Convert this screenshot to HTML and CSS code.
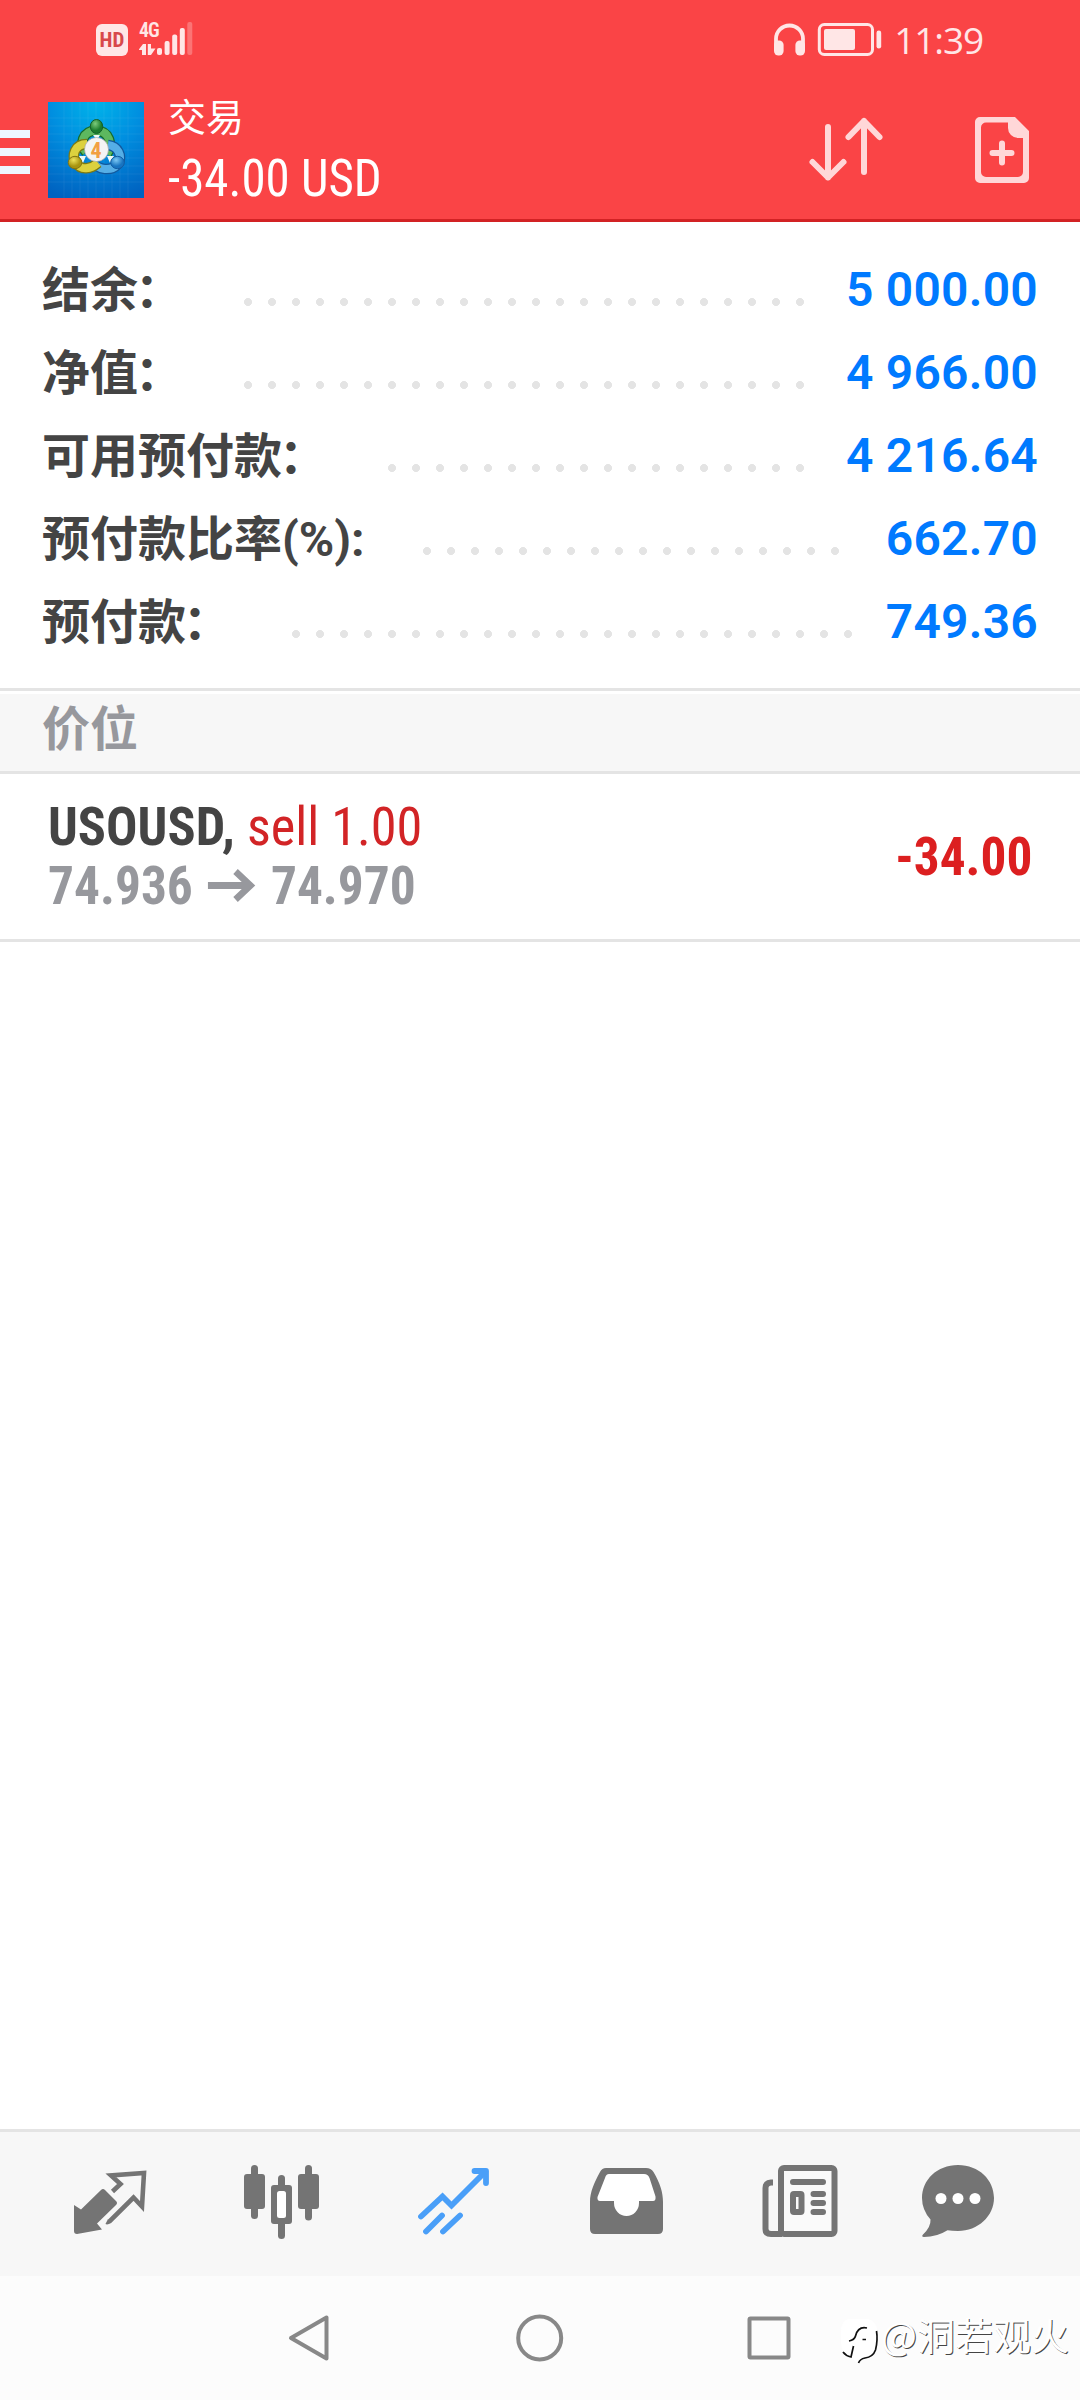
FILE: index.html
```html
<!DOCTYPE html>
<html lang="zh-CN">
<head>
<meta charset="utf-8">
<title>交易</title>
<link rel="stylesheet" href="styles.css">
</head>
<body>
<div class="screen">
  <header class="top">
    <div class="status">
      <div class="status-left">
        <span class="hd">HD</span>
        <div class="network">
          <span class="net-type">4G</span>
          <svg class="signal" viewBox="139 20 54 36" width="54" height="36">
            <g fill="#ffe6e6">
              <path d="M138.500 50L143 44H146V55H142V50Z"/>
              <path d="M147.800 44H151V48.500H155.500L151 55H147.800Z"/>
              <rect x="157" y="48" width="5" height="7" rx="2"/>
              <rect x="164.600" y="41" width="5" height="14" rx="2"/>
              <rect x="172.200" y="34.500" width="5" height="20.500" rx="2"/>
              <rect x="179.800" y="28" width="5" height="27" rx="2"/>
              <rect x="187.300" y="22" width="5" height="33" rx="2" opacity=".3"/>
            </g>
          </svg>
        </div>
      </div>
      <div class="status-right">
        <svg viewBox="772 20 112 38" width="112" height="38">
          <path d="M776 46V39a13.500 13.500 0 0 1 27 0v7" fill="none" stroke="#ffe6e6" stroke-width="3.800"/>
          <rect x="774" y="40.500" width="9.600" height="15" rx="4.500" fill="#ffe6e6"/>
          <rect x="795.400" y="40.500" width="9.600" height="15" rx="4.500" fill="#ffe6e6"/>
          <rect x="819.300" y="24.500" width="53.200" height="30" rx="5" fill="none" stroke="#ffe6e6" stroke-width="3"/>
          <rect x="824" y="29" width="31" height="21" rx="2" fill="#ffe6e6"/>
          <rect x="876.500" y="30.500" width="4.700" height="18" rx="2.300" fill="#ffe6e6"/>
        </svg>
        <span class="clock">11:39</span>
      </div>
    </div>
    <div class="appbar">
      <div class="menu"><i></i><i></i><i></i></div>
      <svg class="logo" viewBox="0 0 96 96" width="96" height="96">
        <defs>
          <radialGradient id="sky" cx="50%" cy="0%" r="105%">
            <stop offset="0" stop-color="#00b4ea"/><stop offset=".45" stop-color="#008fe0"/><stop offset="1" stop-color="#0062c0"/>
          </radialGradient>
          <radialGradient id="green" cx="40%" cy="30%"><stop offset="0" stop-color="#7ccb7c"/><stop offset="1" stop-color="#1c7c2c"/></radialGradient>
          <radialGradient id="yellow" cx="40%" cy="30%"><stop offset="0" stop-color="#eee35a"/><stop offset="1" stop-color="#a89410"/></radialGradient>
          <radialGradient id="blue" cx="40%" cy="30%"><stop offset="0" stop-color="#7cc8f4"/><stop offset="1" stop-color="#1874c0"/></radialGradient>
        </defs>
        <rect width="96" height="96" fill="url(#sky)"/>
        <path d="M16 0V96M24 0V96M32 0V96M40 0V96M48 0V96M56 0V96M64 0V96M72 0V96M80 0V96M0 16H96M0 24H96M0 32H96M0 40H96M0 48H96M0 56H96M0 64H96M0 72H96M0 80H96" stroke="#fff" stroke-opacity=".06"/>
        <g fill="none">
          <path d="M38 50C31 43 34 29 48 28.500C62 29 65 43 59 52" stroke="#176b2a" stroke-width="10.500"/>
          <path d="M38 50C31 43 34 29 48 28.500C62 29 65 43 59 52" stroke="#5db85f" stroke-width="8"/>
          <path d="M60 43C70 44 75 54 70 62C63 70 50 68 45 60" stroke="#12589c" stroke-width="10.500"/>
          <path d="M60 43C70 44 75 54 70 62C63 70 50 68 45 60" stroke="#55aee6" stroke-width="8"/>
          <path d="M39 42C27 42 23 53 28 61C33 69 43 67 50 61" stroke="#7c7914" stroke-width="10.500"/>
          <path d="M39 42C27 42 23 53 28 61C33 69 43 67 50 61" stroke="#dcd13e" stroke-width="8"/>
        </g>
        <path d="M31 54h7l-3 7zM66 54h-7l3 7zM45 33h7l-3 5z" fill="#effaf8"/>
        <ellipse cx="48.500" cy="24.500" rx="6.200" ry="7" fill="url(#green)" stroke="#15602a"/>
        <ellipse cx="27" cy="60.500" rx="6.800" ry="6.200" fill="url(#yellow)" stroke="#847410"/>
        <ellipse cx="69.500" cy="60.500" rx="6.800" ry="6.200" fill="url(#blue)" stroke="#125ca4"/>
        <circle cx="48.500" cy="47.500" r="12" fill="#f4f4f4" stroke="#999" stroke-width=".6"/>
        <text x="48" y="55.500" text-anchor="middle" class="logo-digit">4</text>
      </svg>
      <div class="heading">
        <div class="title">交易</div>
        <div class="profit">-34.00 USD</div>
      </div>
      <div class="actions">
        <svg viewBox="808 114 76 72" width="76" height="72" fill="none" stroke="#ffd7d8" stroke-width="6" stroke-linecap="round" stroke-linejoin="round">
          <path d="M828 127V177.500M812.500 162L828 177.500L843.500 162M864 172V121M848.500 137L864 121L879.500 137"/>
        </svg>
        <svg viewBox="972 114 60 72" width="60" height="72">
          <path fill="#ffd7d8" fill-rule="evenodd" d="M980 117H1015L1029 131V178a5 5 0 0 1-5 5H980a5 5 0 0 1-5-5V122a5 5 0 0 1 5-5ZM986 122.500a5 5 0 0 0-5 5V172a5 5 0 0 0 5 5H1018a5 5 0 0 0 5-5V138H1018a10 10 0 0 1-10-10V122.500Z"/>
          <path d="M1002 143.500V162.500M992.500 153H1011.500" stroke="#ffd7d8" stroke-width="6" stroke-linecap="round"/>
        </svg>
      </div>
    </div>
  </header>

  <section class="summary">
    <div class="row"><span class="label">结余<span class="colon">：</span></span><i class="leader" style="--dots:24"></i><b>5 000.00</b></div>
    <div class="row"><span class="label">净值<span class="colon">：</span></span><i class="leader" style="--dots:24"></i><b>4 966.00</b></div>
    <div class="row"><span class="label">可用预付款<span class="colon">：</span></span><i class="leader" style="--dots:18"></i><b>4 216.64</b></div>
    <div class="row"><span class="label">预付款比率(%):</span><i class="leader" style="--dots:18"></i><b>662.70</b></div>
    <div class="row"><span class="label">预付款<span class="colon">：</span></span><i class="leader" style="--dots:24"></i><b>749.36</b></div>
  </section>

  <h2 class="section-title">价位</h2>

  <main class="positions">
    <article class="position">
      <div class="info">
        <div class="symbol">USOUSD, <span class="side">sell 1.00</span></div>
        <div class="prices"><span>74.936</span>
          <svg viewBox="207 870 52 36" width="52" height="36"><path d="M208 887.500H254M237 873.500L252.500 887.500L237 901.500" fill="none" stroke="#97989d" stroke-width="7"/></svg>
          <span>74.970</span></div>
      </div>
      <div class="result">-34.00</div>
    </article>
  </main>

  <nav class="tabs">
    <svg viewBox="24 2132 172 144">
      <path fill="#747474" d="M74 2205L81 2209.500L101 2190Q103 2188 105 2190L116 2201Q118 2203 116 2205L97 2223.500L102 2229.500L77 2234Q74 2234 74 2231Z"/>
      <path d="M112.500 2191.500L120.500 2184L111 2175.500L144 2173L142 2206.500L133.500 2197.500L110 2221Q107.500 2222.500 106.500 2222" fill="none" stroke="#747474" stroke-width="4.600"/>
    </svg>
    <svg viewBox="196 2132 172 144">
      <g fill="#747474">
        <rect x="251" y="2165" width="7" height="54" rx="3.500"/><rect x="244" y="2174" width="21" height="35" rx="3"/>
        <rect x="278" y="2175" width="7" height="64" rx="3.500"/><rect x="271" y="2185" width="21" height="39" rx="3"/>
        <rect x="305" y="2165" width="7" height="55.500" rx="3.500"/><rect x="298" y="2174" width="21" height="35" rx="3"/>
      </g>
      <rect x="277" y="2191" width="9" height="27" rx="2.500" fill="#fff"/>
    </svg>
    <svg viewBox="368 2132 172 144" fill="none" stroke="#4a9ff8" stroke-width="5.800" stroke-linecap="round">
      <path d="M421 2216.500L442.500 2196.500L451.500 2205.500L485 2172"/>
      <path d="M474.500 2171H486V2183" stroke-linejoin="round"/>
      <path d="M426 2231.500L442 2215.500M443 2231.500L460 2215.500"/>
    </svg>
    <svg viewBox="540 2132 172 144">
      <path fill="#747474" d="M606 2168H646Q651 2168 653.500 2172C660 2183 663 2192 663 2202V2229Q663 2234 658 2234H595Q590 2234 590 2229V2202C590 2192 594 2183 600 2172Q602 2168 606 2168Z"/>
      <path fill="#fff" d="M609 2174H644Q648 2174 649.500 2178L655.500 2196.500Q656 2201 653 2201H639V2203A12.500 13 0 0 1 614 2203V2201H600Q597 2201 597.500 2197L605 2178Q606 2174 609 2174Z"/>
    </svg>
    <svg viewBox="712 2132 172 144">
      <g fill="none" stroke="#747474" stroke-width="6">
        <rect x="781" y="2168" width="53.500" height="66" rx="3" fill="#fafafa"/>
        <path d="M773 2182.500H771Q765.500 2183 765.500 2188V2229Q765.500 2234 771 2234H782"/>
        <rect x="793" y="2194" width="8.500" height="18" rx="1"/>
        <path d="M793 2182H823M813.500 2194H823M813.500 2203H823M813.500 2212H823" stroke-linecap="round"/>
      </g>
    </svg>
    <svg viewBox="884 2132 172 144">
      <path fill="#747474" d="M958 2165C979 2165 994 2180 994 2198C994 2216 978 2231 958 2231Q952 2231 947.500 2230.300Q937 2237 924 2237Q921 2236.500 923 2234.500Q931 2227 930.500 2219.500Q922 2210 922 2198C922 2180 937 2165 958 2165Z"/>
      <g fill="#fff"><circle cx="941" cy="2198.500" r="5.500"/><circle cx="958" cy="2198.500" r="5.500"/><circle cx="975" cy="2198.500" r="5.500"/></g>
    </svg>
  </nav>

  <footer class="system">
    <svg viewBox="280 2310 520 56" width="520" height="56" fill="none" stroke="#888" stroke-width="4" stroke-linejoin="round">
      <path d="M326.500 2317.500V2358.500L291 2338Z"/>
      <circle cx="539.700" cy="2338" r="21.500"/>
      <rect x="749.500" y="2318.500" width="39" height="39" rx="1"/>
    </svg>
    <div class="watermark">
      <svg viewBox="840 2318 40 48" width="40" height="48">
        <path fill="#fff" d="M849 2319H868Q877 2321 877 2331V2350Q876 2357 866 2357L858 2364L851 2358Q841 2354 841 2342V2330Q842 2320 849 2319Z"/>
        <path d="M867 2328Q858 2326 855.500 2336Q854.500 2340 849 2341M853.500 2346L851 2357Q846 2356 843 2352M862.500 2339.500H866M876.500 2331Q878 2340 875.500 2350Q873 2357 865 2358Q860 2359 858.500 2363" fill="none" stroke="#111" stroke-width="1.700"/>
      </svg>
      <span>@洞若观火</span>
    </div>
  </footer>
</div>
</body>
</html>
```
FILE: styles.css
```css
* { box-sizing: border-box; }
body { margin: 0; background: #fff; font-family: Roboto, "Noto Sans CJK SC", sans-serif; }
svg { display: block; flex: none; }
i, b { font-style: normal; }

.screen { display: flex; flex-direction: column; width: 1080px; height: 2400px; overflow: hidden; }

.top { height: 222px; background: #fa4446; border-bottom: 3px solid #d22224; }
.status { display: flex; justify-content: space-between; height: 80px; padding: 20px 97px 0 96px; color: #ffe6e6; }
.status-left { display: flex; gap: 11px; }
.hd { width: 32px; height: 32px; margin-top: 4px; border-radius: 6px; background: #ffe6e6; color: #d8484a; font: 700 21px/33px "Roboto Condensed", Roboto, sans-serif; text-align: center; }
.network { display: grid; }
.network > * { grid-area: 1 / 1; }
.net-type { font: 600 20px/20px "Roboto Condensed", Roboto, sans-serif; letter-spacing: -1px; }
.status-right { display: flex; gap: 10px; }
.clock { font: 400 37px/40px "Open Sans", sans-serif; letter-spacing: -1.1px; }

.appbar { display: flex; height: 139px; }
.menu { display: flex; flex-direction: column; gap: 10px; width: 30px; margin: 50px 18px 0 0; }
.menu i { height: 8px; background: #eef6ff; }
.logo { margin-top: 22px; }
.logo-digit { font: 700 22px "Roboto Condensed", Roboto, sans-serif; fill: #f2a042; }
.heading { margin-left: 24px; padding-top: 13px; color: #fff; }
.title { font-size: 38px; line-height: 50px; }
.profit { font: 450 51px/72px "Roboto Condensed", Roboto, sans-serif; white-space: nowrap; transform: scaleX(.96); transform-origin: left; }
.actions { display: flex; gap: 88px; margin: 34px 48px 0 auto; }

.summary { height: 466px; padding: 26px 42px 0; }
.row { display: flex; align-items: baseline; height: 83px; font-size: 48px; font-weight: 700; line-height: 83px; color: #444; white-space: nowrap; }
.row b { margin-left: auto; color: #007aff; font-weight: 650; letter-spacing: .25px; }
.label { transform: translateY(1px); }
.colon { margin: 0 3px 0 -3px; }
.leader { width: calc(var(--dots) * 24px); height: 8px; margin: 0 0 3px 50px; background: radial-gradient(circle at center, #e4e4e4 3.7px, transparent 4.3px) 0 0 / 24px 8px; }

.section-title { height: 86px; margin: 0; padding: 0 42px; border-top: 3px solid #e4e4e4; border-bottom: 3px solid #e4e4e4; background: linear-gradient(#fff 3px, #f7f7f7 3px); color: #97989d; font-size: 48px; font-weight: 700; line-height: 77px; }

.positions { flex: 1; }
.position { display: flex; justify-content: space-between; height: 168px; padding: 23px 48px 0; border-bottom: 3px solid #e4e4e4; font: 700 54px/59px "Roboto Condensed", Roboto, sans-serif; color: #444; }
.symbol { transform: scaleX(.968); transform-origin: left; }
.side { font-weight: 430; color: #d22426; }
.prices { display: flex; gap: 15px; align-items: center; color: #97989d; transform: scaleX(.952); transform-origin: left; }
.result { padding-top: 30px; color: #dc1f20; transform: scaleX(.95); transform-origin: right; }

.tabs { display: flex; height: 147px; padding: 0 24px; border-top: 3px solid #e4e4e4; background: #f7f7f7; }
.tabs svg { width: 172px; height: 144px; }

.system { position: relative; height: 124px; padding: 34px 0 0 280px; background: #fcfcfc; }
.watermark { position: absolute; top: 42px; left: 840px; display: flex; gap: 1px; width: 240px; color: #fff; font: 400 38px/32px "Noto Sans CJK SC", sans-serif; text-shadow: 1px 1px 0 #444; white-space: nowrap; }
```
